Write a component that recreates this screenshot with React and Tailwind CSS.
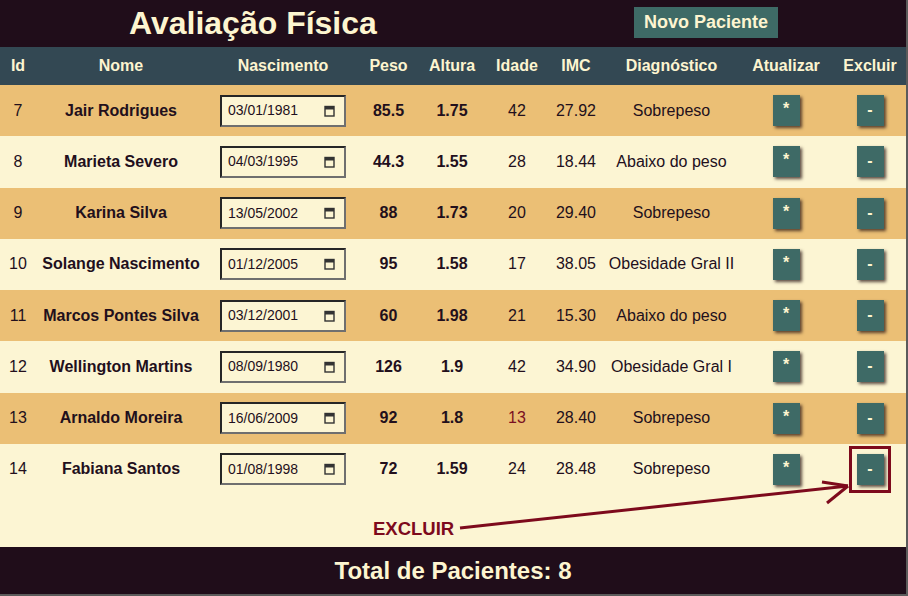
import React from "react";

const rows = [
  { id: 7, nome: "Jair Rodrigues", nasc: "03/01/1981", peso: "85.5", altura: "1.75", idade: 42, imc: "27.92", diag: "Sobrepeso" },
  { id: 8, nome: "Marieta Severo", nasc: "04/03/1995", peso: "44.3", altura: "1.55", idade: 28, imc: "18.44", diag: "Abaixo do peso" },
  { id: 9, nome: "Karina Silva", nasc: "13/05/2002", peso: "88", altura: "1.73", idade: 20, imc: "29.40", diag: "Sobrepeso" },
  { id: 10, nome: "Solange Nascimento", nasc: "01/12/2005", peso: "95", altura: "1.58", idade: 17, imc: "38.05", diag: "Obesidade Gral II" },
  { id: 11, nome: "Marcos Pontes Silva", nasc: "03/12/2001", peso: "60", altura: "1.98", idade: 21, imc: "15.30", diag: "Abaixo do peso" },
  { id: 12, nome: "Wellington Martins", nasc: "08/09/1980", peso: "126", altura: "1.9", idade: 42, imc: "34.90", diag: "Obesidade Gral I" },
  { id: 13, nome: "Arnaldo Moreira", nasc: "16/06/2009", peso: "92", altura: "1.8", idade: 13, imc: "28.40", diag: "Sobrepeso", red: true },
  { id: 14, nome: "Fabiana Santos", nasc: "01/08/1998", peso: "72", altura: "1.59", idade: 24, imc: "28.48", diag: "Sobrepeso" },
];

function CalIcon() {
  return (
    <svg width="11" height="12" viewBox="0 0 11 12" className="shrink-0">
      <rect x="1" y="1.5" width="9" height="9.5" fill="none" stroke="#333" strokeWidth="1.4" />
      <rect x="1" y="1.5" width="9" height="3" fill="#333" />
    </svg>
  );
}

function DateBox({ value }) {
  return (
    <div className="mx-auto w-[126px] h-[32px] bg-[#fcf5d3] border-2 border-t-[#262626] border-l-[#262626] border-r-[#6f6f6f] border-b-[#6f6f6f] flex items-center pl-[6px] pr-[9px] text-[14px] text-[#1f1020]">
      <span className="flex-1 text-left">{value}</span>
      <CalIcon />
    </div>
  );
}

function Btn({ children, glyphClass }) {
  return (
    <div className="mx-auto w-[27px] h-[31px] bg-[#3e6a66] shadow-[2px_2px_3px_rgba(40,20,20,0.75)] flex justify-center text-[#fdf5d0] font-bold">
      <span className={glyphClass}>{children}</span>
    </div>
  );
}

export default function App() {
  return (
    <div className="w-[908px] h-[596px] bg-[#5b5b5b] font-['Liberation_Sans',Arial,sans-serif]">
      <div className="relative w-[906px] h-[594px] flex flex-col bg-[#fcf5d3]">
        <header className="h-[47px] bg-[#200d1a] flex items-center shrink-0">
          <h1 className="ml-[129px] mb-[2px] text-[32px] font-bold text-[#fdf5d0] leading-none">Avaliação Física</h1>
          <button className="ml-auto mr-[128px] w-[144px] h-[31px] mb-[2px] bg-[#3e6a66] text-[#fdf5d0] text-[18px] font-bold flex items-center justify-center">
            Novo Paciente
          </button>
        </header>
        <table className="w-full table-fixed border-collapse shrink-0">
          <colgroup>
            <col className="w-[36px]" />
            <col className="w-[170px]" />
            <col className="w-[154px]" />
            <col className="w-[57px]" />
            <col className="w-[70px]" />
            <col className="w-[60px]" />
            <col className="w-[58px]" />
            <col className="w-[133px]" />
            <col className="w-[96px]" />
            <col className="w-[72px]" />
          </colgroup>
          <thead>
            <tr className="h-[38px] bg-[#334853] text-[#fdf5d0] text-[16px] font-bold">
              <th className="p-0">Id</th>
              <th className="p-0">Nome</th>
              <th className="p-0">Nascimento</th>
              <th className="p-0">Peso</th>
              <th className="p-0">Altura</th>
              <th className="p-0">Idade</th>
              <th className="p-0">IMC</th>
              <th className="p-0">Diagnóstico</th>
              <th className="p-0">Atualizar</th>
              <th className="p-0">Excluir</th>
            </tr>
          </thead>
          <tbody className="text-[16px] text-[#220f1c]">
            {rows.map((r, i) => (
              <tr key={r.id} className={i % 2 === 0 ? "h-[51.25px] bg-[#ebbf75]" : "h-[51.25px] bg-[#fcf5d3]"}>
                <td className="p-0 text-center">{r.id}</td>
                <td className="p-0 text-center font-bold whitespace-nowrap">{r.nome}</td>
                <td className="p-0 text-center"><DateBox value={r.nasc} /></td>
                <td className="p-0 text-center font-bold">{r.peso}</td>
                <td className="p-0 text-center font-bold">{r.altura}</td>
                <td className={r.red ? "p-0 text-center text-[#7a0f22]" : "p-0 text-center"}>{r.idade}</td>
                <td className="p-0 text-center">{r.imc}</td>
                <td className="p-0 text-center whitespace-nowrap">{r.diag}</td>
                <td className="p-0 text-center"><Btn glyphClass="text-[16px] leading-none mt-[6px]">*</Btn></td>
                <td className="p-0 text-center"><Btn glyphClass="text-[16px] leading-none mt-[7px]">-</Btn></td>
              </tr>
            ))}
          </tbody>
        </table>
        <div className="flex-1 pl-[373px] pt-[20px]">
          <span className="text-[18.5px] font-bold text-[#7d0a1c]">EXCLUIR</span>
        </div>
        <footer className="h-[47px] bg-[#200d1a] flex items-center justify-center shrink-0">
          <span className="text-[24px] font-bold text-[#fdf5d0]">Total de Pacientes: 8</span>
        </footer>
        <svg className="absolute left-0 top-0 pointer-events-none" width="906" height="594" viewBox="0 0 906 594">
          <rect x="850.5" y="447.5" width="39" height="44" fill="none" stroke="#7d0a1c" strokeWidth="3" />
          <line x1="460" y1="528" x2="848" y2="486" stroke="#7d0a1c" strokeWidth="3" />
          <line x1="822" y1="482" x2="848" y2="486" stroke="#7d0a1c" strokeWidth="3" />
          <line x1="827" y1="503" x2="848" y2="486" stroke="#7d0a1c" strokeWidth="3" />
        </svg>
      </div>
    </div>
  );
}
